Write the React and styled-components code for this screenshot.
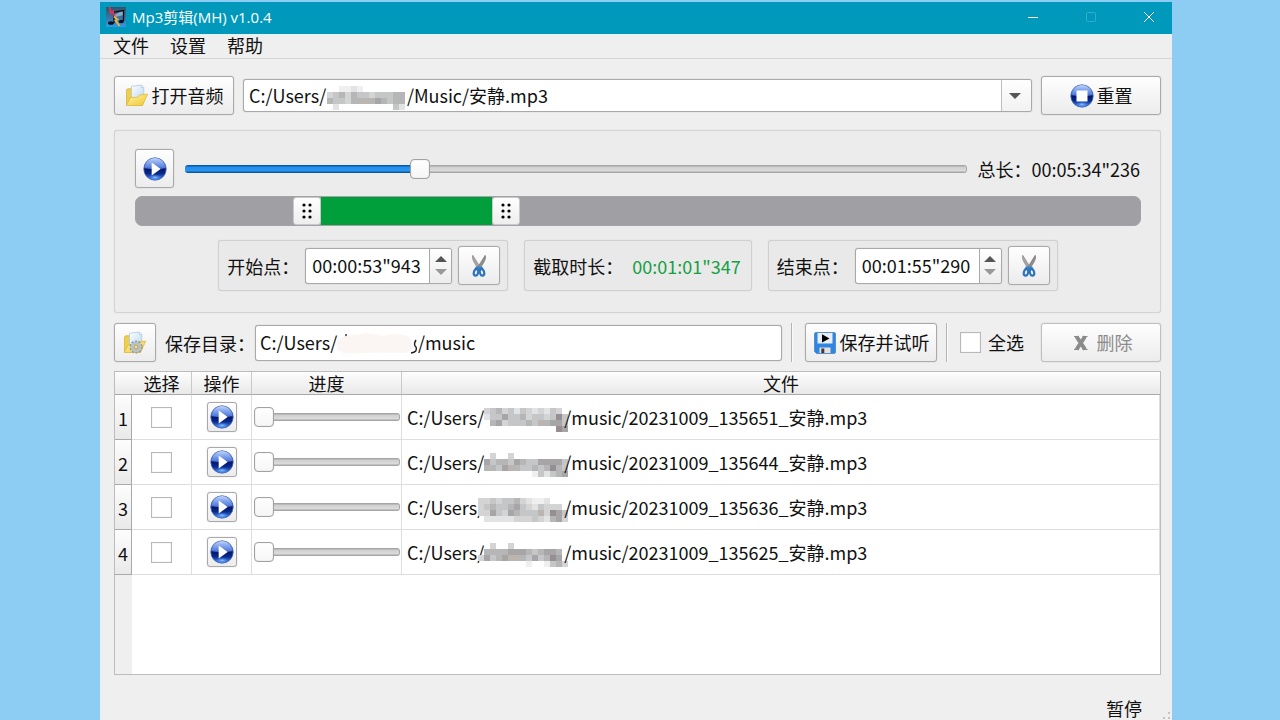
import React, { useState } from "react";
import styled, { createGlobalStyle, css } from "styled-components";

const GlobalStyle = createGlobalStyle`
  *, *::before, *::after { box-sizing: border-box; }
  body {
    margin: 0;
    background: #8dcdf4;
    color: #111;
    font: 18px/24px "Noto Sans CJK SC", sans-serif;
  }
  button, input, select { font: inherit; color: inherit; }
`;

const raised = css`
  background: linear-gradient(#fefefe, #ececec);
  border: 1px solid #a9a9a9;
  box-shadow: 0 0 1px #a4a4a4;
  border-radius: 3px;
`;

const Desktop = styled.div`
  display: flex;
  min-height: 100vh;
  padding: 2px 108px 0 100px;
`;

const Window = styled.div`
  flex: 1;
  min-width: 0;
  display: flex;
  flex-direction: column;
  background: #efefef;
`;

const TitleBar = styled.header`
  display: flex;
  align-items: center;
  height: 33px;
  padding: 0 4px 3px 6px;
  gap: 6px;
  background: #0099bc;
  border-bottom: 1px solid #e2f4f8;
  color: #fff;
`;

const Title = styled.h1`
  flex: 1;
  margin: 0;
  font: 400 15px/20px "Open Sans", "Noto Sans CJK SC", sans-serif;
`;

const Caption = styled.button`
  display: flex;
  align-items: center;
  justify-content: center;
  width: 38px;
  height: 28px;
  margin-left: 14px;
  padding: 0;
  border: 0;
  background: none;
  opacity: ${(p) => (p.disabled ? 0.2 : 1)};
`;

const MenuBar = styled.nav`
  display: flex;
  gap: 1px;
  height: 24px;
  padding: 0 3px;
  border-bottom: 1px solid #d6d6d6;
`;

const MenuItem = styled.button`
  padding: 0 10px 3px;
  border: 0;
  background: none;
  line-height: 20px;
`;

const Main = styled.main`
  flex: 1;
  display: flex;
  flex-direction: column;
  padding: 17px 11px 0 14px;
`;

const Row = styled.div`
  display: flex;
  align-items: center;
  gap: 9px;
`;

const PushButton = styled.button`
  ${raised}
  display: flex;
  align-items: center;
  justify-content: center;
  flex: none;
  gap: 3px;
  width: ${(p) => p.$width}px;
  height: ${(p) => p.$height || 39}px;
  padding: 0;
  &:disabled { color: #8b8b8b; border-color: #c0c0c0; }
`;

const Caps = styled.span`
  padding-bottom: 2px;
`;

const Combo = styled.div`
  position: relative;
  flex: 1;
  min-width: 0;
`;

const Select = styled.select`
  appearance: none;
  display: block;
  width: 100%;
  height: 33px;
  padding: 0 36px 1px 5px;
  background: #fff;
  border: 1px solid #a9a9a9;
  box-shadow: 0 0 1px #a4a4a4;
  border-radius: 3px;
`;

const ComboArrow = styled.span`
  position: absolute;
  top: 1px;
  right: 1px;
  bottom: 1px;
  width: 30px;
  display: flex;
  align-items: center;
  justify-content: center;
  padding-right: 3px;
  border-left: 1px solid #bdbdbd;
  border-radius: 0 2px 2px 0;
  background: linear-gradient(#fefefe, #f2f2f2);
  pointer-events: none;
`;

const Cover = styled.span`
  position: absolute;
  left: ${(p) => p.$left}px;
  top: ${(p) => p.$top}px;
  display: flex;
  pointer-events: none;
  svg { overflow: visible; }
`;

const Panel = styled.section`
  display: flex;
  flex-direction: column;
  margin: 15px 0 10px;
  padding: 18px 19px 21px 20px;
  background: #ececec;
  border: 1px solid #d3d3d3;
  box-shadow: 0 0 1px #ccc;
  border-radius: 3px;
`;

const Player = styled(Row)`
  gap: 11px;
`;

const Total = styled.span`
  margin-right: 1px;
  white-space: nowrap;
`;

const Range = styled.input`
  appearance: none;
  flex: 1;
  display: block;
  width: 100%;
  min-width: 0;
  height: 20px;
  margin: 0;
  background: none;
  &::-webkit-slider-runnable-track {
    height: 8px;
    border-radius: 3px;
    background:
      linear-gradient(#0b59a6 1px, #1f90ec 2px, #2a96ee 6px, #0b59a6 7px) no-repeat 0 0 / var(--done) 100%,
      linear-gradient(#a6a6a6 1px, #cfcfcf 2px, #dcdcdc 6px, #a6a6a6 7px);
    box-shadow: inset -1px 0 #a6a6a6;
  }
  &::-webkit-slider-thumb {
    appearance: none;
    width: 20px;
    height: 20px;
    margin-top: -6px;
    border: 1px solid #a2a2a2;
    box-shadow: inset 0 0 1px #aaa;
    border-radius: 4px;
    background: linear-gradient(#fff, #f6f6f6);
  }
`;

const ClipBar = styled.div`
  display: flex;
  height: 30px;
  margin: 8px 0 14px;
  border: 1px solid #a3a2a7;
  border-radius: 7px;
  background: #a09fa4;
`;

const ClipSpan = styled.div`
  flex: 1 1 0;
  background: ${(p) => (p.$active ? "#009f3c" : "transparent")};
`;

const ClipHandle = styled.button`
  display: flex;
  align-items: center;
  justify-content: center;
  flex: none;
  width: 28px;
  padding: 0;
  background: linear-gradient(#fefefe, #eee);
  border: 1px solid #c9c9c9;
  border-radius: 3px;
`;

const Groups = styled.div`
  display: flex;
  justify-content: center;
  gap: 16px;
`;

const Group = styled.div`
  display: flex;
  align-items: center;
  height: 51px;
  padding: 0 7px 0 8px;
  border: 1px solid #d0d0d0;
  box-shadow: 0 0 1px #ccc;
  border-radius: 3px;
  background: #e9e9e9;
`;

const Length = styled.output`
  margin: 0 3px 0 9px;
  color: #14a044;
`;

const Spin = styled.div`
  display: flex;
  width: 147px;
  height: 36px;
  margin: 0 6px;
  overflow: hidden;
  border: 1px solid #a9a9a9;
  box-shadow: 0 0 1px #a4a4a4;
  border-radius: 3px;
  background: #fff;
`;

const SpinInput = styled.input`
  flex: 1;
  min-width: 0;
  padding: 0 0 1px 6px;
  border: 0;
  background: none;
`;

const SpinButtons = styled.div`
  display: flex;
  flex-direction: column;
  width: 22px;
  border-left: 1px solid #a9a9a9;
  background: linear-gradient(#fefefe, #ececec);
`;

const SpinButton = styled.button`
  flex: 1;
  display: flex;
  align-items: center;
  justify-content: center;
  padding: ${(p) => (p.$down ? "0 0 4px" : "4px 0 0")};
  border: 0;
  background: none;
`;

const Field = styled.div`
  display: flex;
  align-items: center;
  flex: 1;
  min-width: 0;
`;

const InputWrap = styled.div`
  position: relative;
  flex: 1;
  min-width: 0;
`;

const TextInput = styled.input`
  display: block;
  width: 100%;
  height: 36px;
  padding: 0 4px 2px;
  border: 1px solid #a9a9a9;
  box-shadow: 0 0 1px #a4a4a4;
  border-radius: 3px;
  background: #fff;
`;

const Divider = styled.div`
  width: 2px;
  height: 39px;
  margin-right: 3px;
  border-left: 1px solid #b4b4b4;
  border-right: 1px solid #fafafa;
`;

const CheckLabel = styled.label`
  display: flex;
  align-items: center;
  gap: 7px;
  margin-right: 8px;
`;

const Check = styled.input`
  appearance: none;
  display: block;
  width: 21px;
  height: 21px;
  margin: 0 auto;
  border: 1px solid #b8b8b8;
  box-shadow: inset 0 0 1px #bbb;
  background: #fff;
  &:checked { background: #1f90ec; }
`;

const TableFrame = styled.div`
  flex: 1;
  margin-top: 9px;
  border: 1px solid #bcbcbc;
  background: linear-gradient(to right, #efefef 17px, #fff 17px);
`;

const Table = styled.table`
  width: 100%;
  table-layout: fixed;
  border-collapse: separate;
  border-spacing: 0;
  th, td { padding: 0; font-weight: 400; }
  col:nth-child(1) { width: 17px; }
  col:nth-child(2), col:nth-child(3) { width: 60px; }
  col:nth-child(4) { width: 150px; }
`;

const HeadCell = styled.th`
  height: 23px;
  line-height: 21px;
  text-align: center;
  background: linear-gradient(#fdfdfd, #e9e9e9);
  border-bottom: 1px solid #a9a9a9;
  border-right: ${(p) => (p.$open ? 0 : "1px solid #c9c9c9")};
`;

const RowHead = styled.th`
  height: 45px;
  text-align: center;
  line-height: 28px;
  vertical-align: bottom;
  background: linear-gradient(#fdfdfd, #e9e9e9);
  border-right: 1px solid #a9a9a9;
  border-bottom: 1px solid #a9a9a9;
  && { padding-bottom: 7px; }
`;

const Cell = styled.td`
  height: 45px;
  border-right: 1px solid #dedede;
  border-bottom: 1px solid #dedede;
`;

const PlayCell = styled.div`
  display: flex;
  justify-content: center;
`;

const SliderCell = styled.div`
  padding: 0 1px 0 2px;
`;

const PathCell = styled.div`
  display: flex;
  align-items: center;
  padding-left: 5px;
  white-space: nowrap;
`;

const Hidden = styled.span`
  display: flex;
  width: 80px;
  height: 24px;
  svg { flex: none; overflow: visible; }
`;

const StatusBar = styled.footer`
  display: flex;
  align-items: flex-end;
  justify-content: flex-end;
  gap: 20px;
  height: 45px;
  padding: 0 2px 0 0;
`;

function Orb({ children }) {
  return (
    <svg width="24" height="24" viewBox="0 0 24 24" aria-hidden="true">
      <defs>
        <linearGradient id="orb" x1="0" y1="0" x2="0" y2="1">
          <stop offset="0" stopColor="#3f6fd0" />
          <stop offset="0.4" stopColor="#3561cc" />
          <stop offset="0.5" stopColor="#04176a" />
          <stop offset="0.7" stopColor="#08298c" />
          <stop offset="1" stopColor="#4b8cf5" />
        </linearGradient>
        <linearGradient id="shine" x1="0" y1="0" x2="0" y2="1">
          <stop offset="0" stopColor="#c3d7fc" />
          <stop offset="1" stopColor="#4f7be2" stopOpacity="0.7" />
        </linearGradient>
        <radialGradient id="glow">
          <stop offset="0" stopColor="#8cc4ff" />
          <stop offset="1" stopColor="#3c7ced" stopOpacity="0" />
        </radialGradient>
      </defs>
      <circle cx="12" cy="12" r="11.2" fill="url(#orb)" stroke="#4a66ac" strokeWidth="0.8" />
      <path d="M1.6 11A10.4 10 0 0 1 22.4 11Q12 13.5 1.6 11Z" fill="url(#shine)" />
      <ellipse cx="12" cy="20.4" rx="7" ry="3" fill="url(#glow)" />
      {children}
    </svg>
  );
}

const PlayIcon = () => (
  <Orb><path d="M8.7 5.5v13L17.6 12z" fill="#fff" /></Orb>
);

const StopIcon = () => (
  <Orb><path d="M6.5 6.5h11v11h-11z" fill="#fff" /></Orb>
);

const FolderIcon = ({ gear }) => (
  <svg width="24" height="24" viewBox="0 0 24 24" aria-hidden="true">
    <defs>
      <linearGradient id="folder" x1="0" y1="0" x2="1" y2="1">
        <stop offset="0" stopColor="#fff6a8" />
        <stop offset="1" stopColor="#efc62e" />
      </linearGradient>
      <linearGradient id="sheet" x1="0" y1="0" x2="1" y2="1">
        <stop offset="0" stopColor="#fff" />
        <stop offset="1" stopColor="#bcd9f1" />
      </linearGradient>
    </defs>
    <path d="M1.5 21V6l1-1.2h5l1.5 2H17V21z" fill="#efcf4d" stroke="#d3ab2c" strokeWidth="0.7" />
    <path d="M6.5 15V2.3L16.5 1l2.3 2.4V15z" fill="url(#sheet)" stroke="#a9c6e0" strokeWidth="0.7" />
    <path d="M16.3 1v2.6h2.4" fill="#dcecfa" stroke="#a9c6e0" strokeWidth="0.6" />
    <path d="M1.3 21.5 5.5 13.5l7-.2 2.2-2.4 8-.8-5.2 11.4z" fill="url(#folder)" stroke="#dcb434" strokeWidth="0.7" />
    {gear && (
      <g fill="none">
        <circle cx="13" cy="16" r="5.6" stroke="#8d9aa6" strokeWidth="2" strokeDasharray="2.1 1.42" />
        <circle cx="13" cy="16" r="4" stroke="#b6c1ca" strokeWidth="2.6" />
        <circle cx="13" cy="16" r="2.1" fill="#f0dd84" stroke="#7f8d99" strokeWidth="0.8" />
      </g>
    )}
  </svg>
);

const ScissorsIcon = () => (
  <svg width="24" height="24" viewBox="0 0 24 24" aria-hidden="true">
    <path d="M5.8 1.3 13.4 13.5l-1.6 2C9 11.5 5.4 6.5 5.4 3z" fill="#a6a6a6" stroke="#8a8a8a" strokeWidth="0.7" />
    <path d="M18.2 1.3 10.6 13.5l1.6 2C15 11.5 18.6 6.5 18.6 3z" fill="#8d8d8d" stroke="#7a7a7a" strokeWidth="0.7" />
    <path d="M9 12.5h6l1.5 2-4.5 2.5-4.5-2.5z" fill="#3c7fc2" />
    <ellipse cx="9" cy="18.4" rx="2.1" ry="3.3" transform="rotate(16 9 18.4)" fill="#eef3f8" stroke="#2f74bb" strokeWidth="2.2" />
    <ellipse cx="15" cy="18.4" rx="2.1" ry="3.3" transform="rotate(-16 15 18.4)" fill="#eef3f8" stroke="#2f74bb" strokeWidth="2.2" />
  </svg>
);

const SaveIcon = () => (
  <svg width="24" height="24" viewBox="0 0 24 24" aria-hidden="true">
    <path d="M1.5 3a1.5 1.5 0 0 1 1.5-1.5h18A1.5 1.5 0 0 1 22.5 3v18a1.5 1.5 0 0 1-1.5 1.5H3.5l-2-2z" fill="#2f86e2" stroke="#5a8fca" />
    <path d="M4.5 2h15v10.5h-15z" fill="#e6eef6" />
    <path d="M9 3.2v8.4L16.5 7.4z" fill="#000" />
    <path d="M6.5 16.5h11V22h-11z" fill="#e4dfd8" />
    <path d="M8.3 17.5h3V22h-3z" fill="#3c3c3c" />
  </svg>
);

const CrossIcon = () => (
  <svg width="24" height="24" viewBox="0 0 24 24" aria-hidden="true">
    <path d="M6.5 5.5 15 18.5M15 5.5 6.5 18.5" stroke="#8b8b8b" strokeWidth="4" />
    <path d="M4 5.5h5M12.5 5.5h5M4 18.5h5M12.5 18.5h5" stroke="#8b8b8b" strokeWidth="1" />
  </svg>
);

const AppIcon = () => (
  <svg width="20" height="20" viewBox="0 0 20 20" aria-hidden="true">
    <defs>
      <linearGradient id="app" x1="0" y1="0" x2="0" y2="1">
        <stop offset="0" stopColor="#35526c" />
        <stop offset="0.5" stopColor="#3d6f9c" />
        <stop offset="1" stopColor="#2d9bea" />
      </linearGradient>
    </defs>
    <rect width="20" height="20" fill="url(#app)" />
    <path d="M9 7.5 18 3v5L9 10z" fill="#84a9c8" />
    <path d="M8 16V5L17.5 3.5V14" fill="none" stroke="#0b1118" strokeWidth="1.3" />
    <ellipse cx="5" cy="16" rx="3" ry="1.8" fill="#0b1118" />
    <ellipse cx="15.3" cy="14.5" rx="2.6" ry="1.8" fill="#0b1118" />
    <path d="m3.5 0 1.5 6 2-1.5 2 6" fill="none" stroke="#e33352" strokeWidth="1.8" />
    <path d="m8 9.5 3.5 3-2 1 4 5.5" fill="none" stroke="#f4b23c" strokeWidth="1.8" />
  </svg>
);

const Triangle = ({ up, color = "#555" }) => (
  <svg width="12" height="6" viewBox="0 0 12 6" aria-hidden="true">
    <path d={up ? "M0 6 6 0l6 6z" : "M0 0h12L6 6z"} fill={color} />
  </svg>
);

const GripDots = () => (
  <svg width="12" height="18" viewBox="0 0 12 18" aria-hidden="true">
    {[3, 9, 15].map((y) => [3, 9].map((x) => <circle key={`${x}-${y}`} cx={x} cy={y} r="1.6" fill="#000" />))}
  </svg>
);

const SHADES = {
  a: "#a7a5a6", b: "#b6b6b7", c: "#c5c6c8", d: "#d4d4d5",
  e: "#e2e3e4", f: "#efefef", g: "#958f94", h: "#bcb5af",
};

const MOSAICS = {
  combo: ["..ffef.......", "dcbdbccdcccbb", "bccdbbhbabcbb", ".e.........ce"],
  1: [".dcbdcecdedecd.", ".eccaccbdccdcgc", "..badcccbchbaac", ".............ga"],
  2: ["..d..d.........", ".acbbcabccaaaac", ".bbcahbccbcbgbc", ".........fcecba"],
  3: ["ddcdccbdeffe...", "dcbccbacdecddd.", "ddacdabccchdgac", ".eeeeedddcdebad"],
  4: ["..d..d.........", ".bbbbaaabcbaab.", "dacbahhbcacbga.", "........f..fcbd"],
};

const Mosaic = ({ kind }) => (
  <svg width="90" height="28" viewBox="0 0 90 28" shapeRendering="crispEdges" aria-hidden="true">
    {MOSAICS[kind].map((line, y) =>
      [...line].map((s, x) => s !== "." && (
        <rect key={`${x}-${y}`} x={x * 6 - 6} y={y * 6 + 3} width="6" height="6" fill={SHADES[s]} />
      ))
    )}
  </svg>
);

const Smudge = () => (
  <svg width="86" height="32" viewBox="0 0 86 32" aria-hidden="true">
    <path d="M80 15q-3 5 0 7 2 5-5 6" fill="none" stroke="#222" strokeWidth="1.5" />
    <path d="M10 9v3" stroke="#333" strokeWidth="1.5" />
    <path d="M2 15Q-1 20 2 25q6 5 20 3 25-1 40 0 14 1 14-6 1-9-7-12-14-2-22 1-14-5-27-1Q7 10 2 15Z" fill="#fbf5f3" />
  </svg>
);

const GAP = "\u00a0".repeat(20);

const FILES = ["20231009_135651", "20231009_135644", "20231009_135636", "20231009_135625"];

function Slider({ label, initial }) {
  const [value, setValue] = useState(initial);
  return (
    <Range
      type="range" min="0" max="1000" aria-label={label} value={value}
      onChange={(e) => setValue(Number(e.target.value))}
      style={{ "--done": `${value / 10}%` }}
    />
  );
}

function TimePoint({ id, label, time }) {
  return (
    <Group>
      <label htmlFor={id}>{label}</label>
      <Spin>
        <SpinInput id={id} defaultValue={time} />
        <SpinButtons>
          <SpinButton aria-label="增加"><Triangle up /></SpinButton>
          <SpinButton $down aria-label="减少"><Triangle color="#999" /></SpinButton>
        </SpinButtons>
      </Spin>
      <PushButton $width={42} aria-label="剪切"><ScissorsIcon /></PushButton>
    </Group>
  );
}

export default function App() {
  return (
    <Desktop>
      <GlobalStyle />
      <Window>
        <TitleBar>
          <AppIcon />
          <Title>Mp3剪辑(MH) v1.0.4</Title>
          <Caption aria-label="最小化">
            <svg width="12" height="12"><path d="M1 6.5h10" stroke="#fff" /></svg>
          </Caption>
          <Caption aria-label="最大化" disabled>
            <svg width="12" height="12"><rect x="1.5" y="1.5" width="9" height="9" rx="1" fill="none" stroke="#fff" /></svg>
          </Caption>
          <Caption aria-label="关闭">
            <svg width="12" height="12"><path d="m1 1 10 10M11 1 1 11" stroke="#fff" /></svg>
          </Caption>
        </TitleBar>
        <MenuBar>
          <MenuItem>文件</MenuItem>
          <MenuItem>设置</MenuItem>
          <MenuItem>帮助</MenuItem>
        </MenuBar>
        <Main>
          <Row>
            <PushButton $width={120}><FolderIcon /><Caps>打开音频</Caps></PushButton>
            <Combo>
              <Select aria-label="音频文件">
                <option>{`C:/Users/${GAP}/Music/安静.mp3`}</option>
              </Select>
              <Cover $left={90} $top={4}><Mosaic kind="combo" /></Cover>
              <ComboArrow><Triangle /></ComboArrow>
            </Combo>
            <PushButton $width={120}><StopIcon /><Caps>重置</Caps></PushButton>
          </Row>

          <Panel>
            <Player>
              <PushButton $width={39} aria-label="播放"><PlayIcon /></PushButton>
              <Slider label="播放进度" initial={295} />
              <Total>总长：00:05:34"236</Total>
            </Player>
            <ClipBar>
              <ClipSpan style={{ flexGrow: 157 }} />
              <ClipHandle aria-label="开始位置"><GripDots /></ClipHandle>
              <ClipSpan $active style={{ flexGrow: 171 }} />
              <ClipHandle aria-label="结束位置"><GripDots /></ClipHandle>
              <ClipSpan style={{ flexGrow: 620 }} />
            </ClipBar>
            <Groups>
              <TimePoint id="start" label="开始点：" time={'00:00:53"943'} />
              <Group>
                <span>截取时长：</span>
                <Length>00:01:01"347</Length>
              </Group>
              <TimePoint id="end" label="结束点：" time={'00:01:55"290'} />
            </Groups>
          </Panel>

          <Row>
            <PushButton $width={42} aria-label="选择目录"><FolderIcon gear /></PushButton>
            <Field>
              <label htmlFor="dir">保存目录：</label>
              <InputWrap>
                <TextInput id="dir" defaultValue={`C:/Users/${GAP}/music`} />
                <Cover $left={81} $top={0}><Smudge /></Cover>
              </InputWrap>
            </Field>
            <Divider />
            <PushButton $width={132}><SaveIcon /><Caps>保存并试听</Caps></PushButton>
            <Divider />
            <CheckLabel><Check type="checkbox" /><Caps>全选</Caps></CheckLabel>
            <PushButton $width={120} disabled><CrossIcon /><Caps>删除</Caps></PushButton>
          </Row>

          <TableFrame>
            <Table>
              <colgroup><col /><col /><col /><col /><col /></colgroup>
              <thead>
                <tr>
                  <HeadCell as="td" $open />
                  <HeadCell>选择</HeadCell>
                  <HeadCell>操作</HeadCell>
                  <HeadCell>进度</HeadCell>
                  <HeadCell $open>文件</HeadCell>
                </tr>
              </thead>
              <tbody>
                {FILES.map((name, i) => (
                  <tr key={name}>
                    <RowHead>{i + 1}</RowHead>
                    <Cell><Check type="checkbox" aria-label={`选择 ${i + 1}`} /></Cell>
                    <Cell>
                      <PlayCell>
                        <PushButton $width={30} $height={30} aria-label="播放"><PlayIcon /></PushButton>
                      </PlayCell>
                    </Cell>
                    <Cell><SliderCell><Slider label={`进度 ${i + 1}`} initial={0} /></SliderCell></Cell>
                    <Cell>
                      <PathCell>
                        <span>C:/Users/</span>
                        <Hidden><Mosaic kind={i + 1} /></Hidden>
                        <span>/music/{name}_安静.mp3</span>
                      </PathCell>
                    </Cell>
                  </tr>
                ))}
              </tbody>
            </Table>
          </TableFrame>
        </Main>
        <StatusBar>
          <span>暂停</span>
          <svg width="8" height="8" aria-hidden="true">
            <path d="M6 0h2v2H6zM6 5h2v2H6zM1 5h2v2H1z" fill="#c4c4c4" />
          </svg>
        </StatusBar>
      </Window>
    </Desktop>
  );
}
